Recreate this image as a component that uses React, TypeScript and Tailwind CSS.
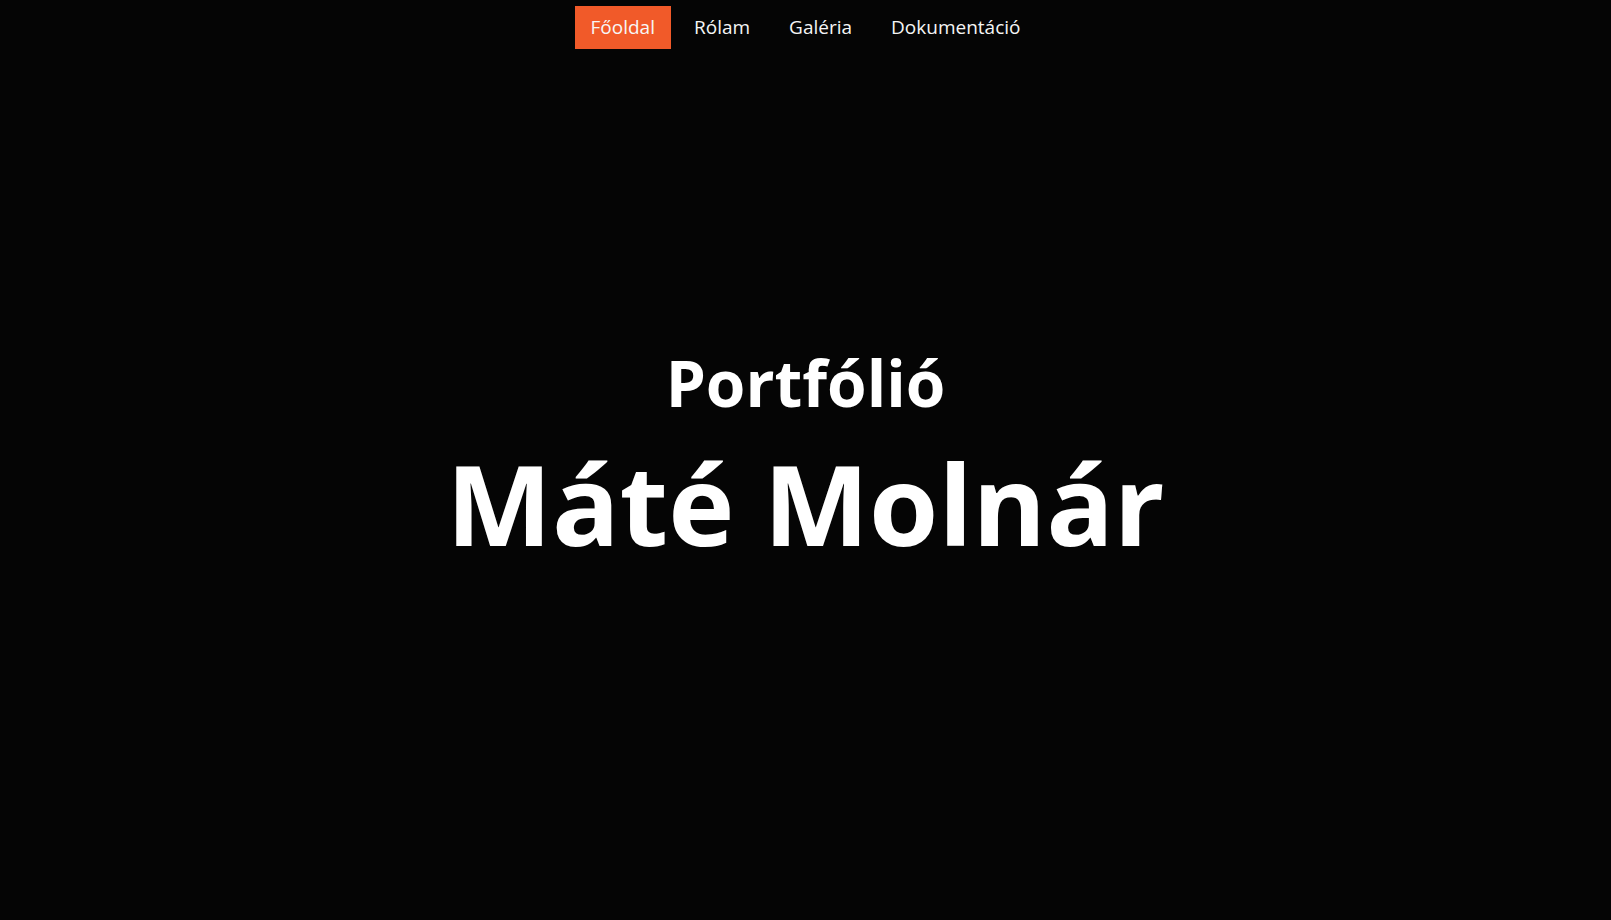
const links = ["Főoldal", "Rólam", "Galéria", "Dokumentáció"];

const App = () => {
  return (
    <div
      className="flex h-screen w-full flex-col bg-[#050505] text-white"
      style={{ fontFamily: '"Open Sans", "Noto Sans", sans-serif' }}
    >
      <nav className="mt-[6px] flex justify-center gap-[7px]">
        {links.map((it, i) => (
          <a
            key={it}
            href="#"
            className={
              i === 0
                ? "flex h-[43px] items-center bg-[#f15a29] px-4 text-[19px] text-[#f7f7f7]"
                : "flex h-[43px] items-center px-4 text-[19px] text-[#f5f5f5]"
            }
          >
            {it}
          </a>
        ))}
      </nav>

      <main className="flex flex-1 flex-col items-center justify-center pb-[60px]">
        <h2 className="text-[64px] font-bold leading-none">Portfólió</h2>
        <h1 className="mt-[32px] text-[112px] font-bold leading-none">
          Máté Molnár
        </h1>
      </main>
    </div>
  );
};

export default App;
